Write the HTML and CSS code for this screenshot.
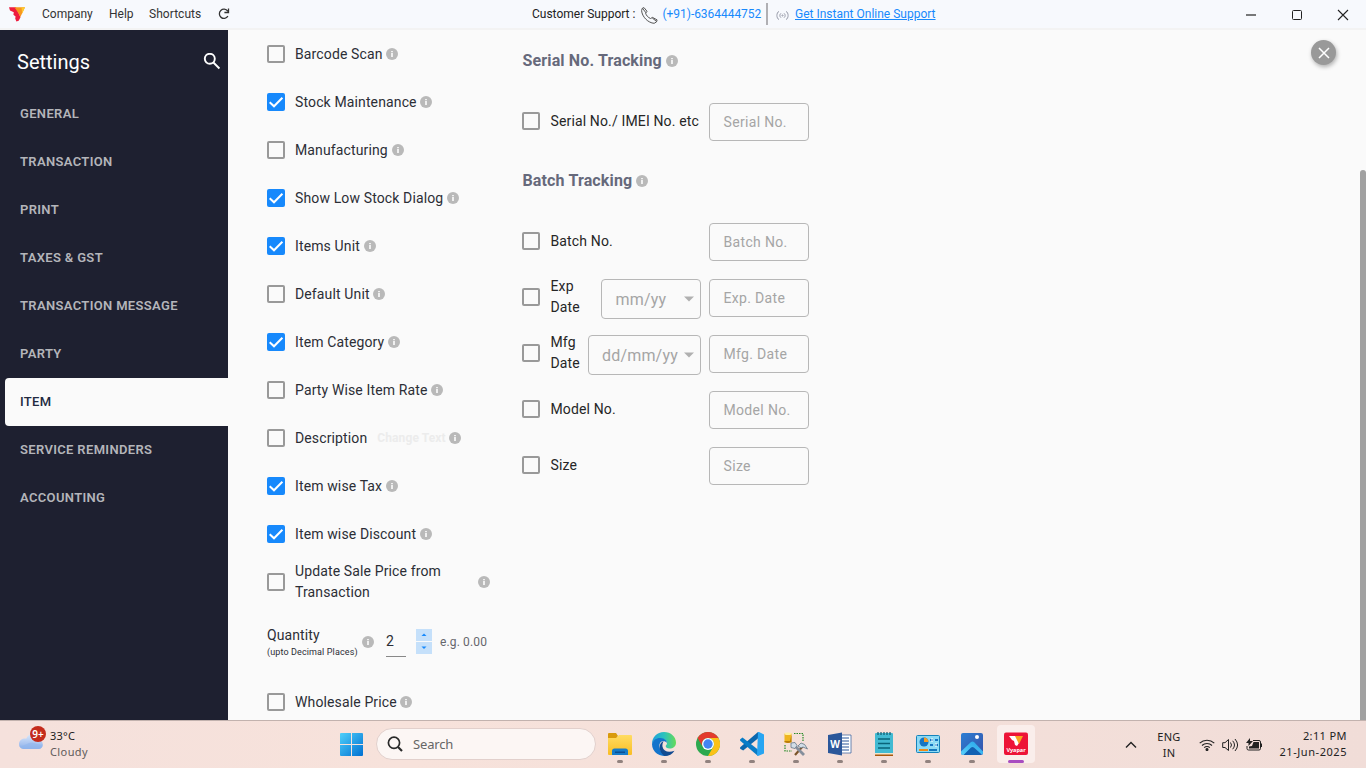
FILE: index.html
```
<!DOCTYPE html>
<html lang="en">
<head>
<meta charset="utf-8">
<title>Settings</title>
<link rel="stylesheet" href="styles.css">
</head>
<body>
<svg class="defs" width="0" height="0">
  <symbol id="info" viewBox="0 0 12 12"><circle cx="6" cy="6" r="6" fill="#b9b9b9"/><path d="M5 3h2v1.200H5zM5 5h2v4H5z" fill="#efefef"/></symbol>
  <symbol id="off" viewBox="0 0 18 18"><rect x="1" y="1" width="16" height="16" rx="1" fill="none" stroke="#999" stroke-width="2"/></symbol>
  <symbol id="on" viewBox="0 0 18 18"><rect width="18" height="18" rx="2" fill="#1789fc"/><path d="M2.700 9.200 7 13.300 15.400 4.800" fill="none" stroke="#fff" stroke-width="2"/></symbol>
  <linearGradient id="gwin" x1="0" y1="0" x2="1" y2="1"><stop offset="0" stop-color="#4fd0fa"/><stop offset="1" stop-color="#0070d2"/></linearGradient>
  <linearGradient id="gcloud" x1="0" y1="0" x2="0" y2="1"><stop offset="0" stop-color="#dce9fb"/><stop offset="1" stop-color="#8db0ea"/></linearGradient>
  <linearGradient id="gfold" x1="0" y1="0" x2="0" y2="1"><stop offset="0" stop-color="#ffdc62"/><stop offset="1" stop-color="#f9bd24"/></linearGradient>
  <linearGradient id="gedge" x1="0" y1="0" x2="1" y2="0"><stop offset="0" stop-color="#209fdc"/><stop offset=".5" stop-color="#2cc2bd"/><stop offset="1" stop-color="#66db58"/></linearGradient>
  <linearGradient id="gphoto" x1="0" y1="0" x2="1" y2="1"><stop offset="0" stop-color="#2c7fd4"/><stop offset="1" stop-color="#3851a8"/></linearGradient>
  <linearGradient id="ghill" x1="0" y1="1" x2="1" y2="0"><stop offset="0" stop-color="#5cd0fa"/><stop offset="1" stop-color="#23a4ea"/></linearGradient>
</svg>

<header class="titlebar">
  <nav class="menu">
    <svg class="logo" width="17" height="15" viewBox="0 0 17 15"><path d="M0 .3h7l3 6.500 1.500 3.400-1.800 3.600-2.300.6-1.200-2.900.4-2.100-2.200-1.700.4-2.500L1 3.500z" fill="#ee1c3e"/><path d="M5.500.3H16L11.400 10 9.300 6z" fill="#f7971e"/><path d="M12.500.3H16L13.200 6.400z" fill="#fdc82f"/></svg>
    <span class="m-company">Company</span><span class="m-help">Help</span><span class="m-short">Shortcuts</span>
    <svg width="12" height="12" viewBox="0 0 12 12" fill="none" stroke="#333" stroke-width="1.300"><path d="M9.700 3.100A4.600 4.600 0 1 0 9.900 8.200M10.500.5v4H6.400"/></svg>
  </nav>
  <div class="support">
    <span class="cs">Customer Support :</span>
    <svg class="phone" width="17" height="17" viewBox="0 0 17 17" fill="none" stroke="#555" stroke-width="1"><path d="M1.200 1.400 3 .6l3 3.700-1.400 1.800c.6 2.400 2.400 4.300 4.900 5.400l2-1.100 4.600 2.500-.6 2-2.300 1.400C7.200 16 1 9.800 .6 3.600zM1.500 1.400 5 5.800M11.200 10.900l4.400 3.600"/></svg>
    <span class="num">(+91)-6364444752</span>
    <i class="divider"></i>
    <svg class="live" width="13" height="9" viewBox="0 0 13 9" fill="none" stroke="#999caa" stroke-width="1"><path d="M3 .4C.2 1.600.2 7.300 3 8.600M10 .4c2.800 1.200 2.800 6.900 0 8.200M5 2.300c-1.500.7-1.500 3.700 0 4.400M8 2.300c1.500.7 1.500 3.700 0 4.400"/><circle cx="6.500" cy="4.500" r=".6"/></svg>
    <span class="online">Get Instant Online Support</span>
  </div>
  <div class="winbtns">
    <svg width="12" height="12" viewBox="0 0 12 12"><path d="M1 6h10" stroke="#222" stroke-width="1.200"/></svg>
    <svg width="12" height="12" viewBox="0 0 12 12"><rect x="1.500" y="1.500" width="9" height="9" rx="1" fill="none" stroke="#222"/></svg>
    <svg width="12" height="12" viewBox="0 0 12 12"><path d="m1 1 10 10M11 1 1 11" stroke="#222" stroke-width="1.100"/></svg>
  </div>
</header>

<div class="app">
  <aside class="sidebar">
    <div class="side-head"><span>Settings</span>
      <svg width="18" height="18" viewBox="0 0 18 18" fill="none" stroke="#fff" stroke-width="1.900"><circle cx="6.800" cy="5.800" r="5"/><path d="m10.400 9.500 6 6"/></svg>
    </div>
    <a class="side">GENERAL</a>
    <a class="side">TRANSACTION</a>
    <a class="side">PRINT</a>
    <a class="side">TAXES &amp; GST</a>
    <a class="side">TRANSACTION MESSAGE</a>
    <a class="side">PARTY</a>
    <a class="side active">ITEM</a>
    <a class="side">SERVICE REMINDERS</a>
    <a class="side">ACCOUNTING</a>
  </aside>

  <main class="content">
    <section class="options">
      <div class="opt"><svg class="cb"><use href="#off"/></svg><span>Barcode Scan</span><svg class="info"><use href="#info"/></svg></div>
      <div class="opt"><svg class="cb"><use href="#on"/></svg><span>Stock Maintenance</span><svg class="info"><use href="#info"/></svg></div>
      <div class="opt"><svg class="cb"><use href="#off"/></svg><span>Manufacturing</span><svg class="info"><use href="#info"/></svg></div>
      <div class="opt"><svg class="cb"><use href="#on"/></svg><span>Show Low Stock Dialog</span><svg class="info"><use href="#info"/></svg></div>
      <div class="opt"><svg class="cb"><use href="#on"/></svg><span>Items Unit</span><svg class="info"><use href="#info"/></svg></div>
      <div class="opt"><svg class="cb"><use href="#off"/></svg><span>Default Unit</span><svg class="info"><use href="#info"/></svg></div>
      <div class="opt"><svg class="cb"><use href="#on"/></svg><span>Item Category</span><svg class="info"><use href="#info"/></svg></div>
      <div class="opt"><svg class="cb"><use href="#off"/></svg><span>Party Wise Item Rate</span><svg class="info"><use href="#info"/></svg></div>
      <div class="opt"><svg class="cb"><use href="#off"/></svg><span>Description</span><b class="change">Change Text</b><svg class="info"><use href="#info"/></svg></div>
      <div class="opt"><svg class="cb"><use href="#on"/></svg><span>Item wise Tax</span><svg class="info"><use href="#info"/></svg></div>
      <div class="opt"><svg class="cb"><use href="#on"/></svg><span>Item wise Discount</span><svg class="info"><use href="#info"/></svg></div>
      <div class="opt"><svg class="cb"><use href="#off"/></svg><span class="wrap">Update Sale Price from Transaction</span><svg class="info"><use href="#info"/></svg></div>
      <div class="qty">
        <div class="qlabel"><span>Quantity</span><small>(upto Decimal Places)</small></div>
        <svg class="info"><use href="#info"/></svg>
        <span class="qval">2</span>
        <div class="spin">
          <span><svg width="6" height="4" viewBox="0 0 6 4"><path d="M.5 3h5L3 .5z" fill="#1789fc"/></svg></span>
          <span><svg width="6" height="4" viewBox="0 0 6 4"><path d="M.5 .5h5L3 3z" fill="#1789fc"/></svg></span>
        </div>
        <span class="eg">e.g. 0.00</span>
      </div>
      <div class="opt"><svg class="cb"><use href="#off"/></svg><span>Wholesale Price</span><svg class="info"><use href="#info"/></svg></div>
    </section>

    <section class="tracking">
      <h2>Serial No. Tracking<svg class="info"><use href="#info"/></svg></h2>
      <div class="trk"><svg class="cb"><use href="#off"/></svg><span class="lab">Serial No./ IMEI No. etc</span><div class="field">Serial No.</div></div>
      <h2 class="second">Batch Tracking<svg class="info"><use href="#info"/></svg></h2>
      <div class="trk"><svg class="cb"><use href="#off"/></svg><span class="lab">Batch No.</span><div class="field">Batch No.</div></div>
      <div class="trk"><svg class="cb"><use href="#off"/></svg><span class="lab two">Exp<br>Date</span><div class="select">mm/yy<svg width="10" height="6" viewBox="0 0 10 6"><path d="M0 .5h10L5 5.500z" fill="#b0b0b0"/></svg></div><div class="field">Exp. Date</div></div>
      <div class="trk"><svg class="cb"><use href="#off"/></svg><span class="lab two">Mfg<br>Date</span><div class="select wide">dd/mm/yy<svg width="10" height="6" viewBox="0 0 10 6"><path d="M0 .5h10L5 5.500z" fill="#b0b0b0"/></svg></div><div class="field">Mfg. Date</div></div>
      <div class="trk"><svg class="cb"><use href="#off"/></svg><span class="lab">Model No.</span><div class="field">Model No.</div></div>
      <div class="trk"><svg class="cb"><use href="#off"/></svg><span class="lab">Size</span><div class="field">Size</div></div>
    </section>

    <div class="close"><svg width="12" height="12" viewBox="0 0 12 12"><path d="m1 1 10 10M11 1 1 11" stroke="#fff" stroke-width="1.500"/></svg></div>
    <i class="scroll"></i>
  </main>
</div>

<footer class="taskbar">
  <div class="weather">
    <svg width="28" height="26" viewBox="0 0 28 26"><path d="M5.500 24h15a4.500 4.500 0 0 0 1-8.800C20.800 11 17.500 8.500 13.800 9c-2.800.3-4.600 2-5.400 4.500C4.500 13 1 15 1 19.300 1 22 3 24 5.500 24z" fill="url(#gcloud)"/><path d="M1.400 20.500C6 22 10 17 14 17.500s7 3 10.800 1.700C25 22 23 24 20.500 24h-15c-2 0-3.700-1.500-4.100-3.500z" fill="#91b6ed" opacity=".6"/><circle cx="20" cy="9" r="8" fill="#c42b1c"/><text x="20" y="12.500" class="badge">9+</text></svg>
    <div><span>33°C</span><span class="dim">Cloudy</span></div>
  </div>
  <div class="tasks">
    <svg class="start" width="23" height="23" viewBox="0 0 23 23"><path d="M1 0h10v11H0V1a1 1 0 0 1 1-1zM12 0h10a1 1 0 0 1 1 1v10H12zM0 12h11v11H1a1 1 0 0 1-1-1zM12 12h11v10a1 1 0 0 1-1 1H12z" fill="url(#gwin)"/></svg>
    <div class="search"><svg width="16" height="16" viewBox="0 0 16 16" fill="none" stroke="#292929" stroke-width="1.700"><circle cx="7" cy="6.800" r="5.600"/><path d="m11 11 4 4" stroke-width="2.200"/></svg><span>Search</span></div>
    <div class="ticon"><svg viewBox="0 0 24 24"><path d="M0 2q0-1 1-1h7l2 3-2 3H0z" fill="#d99a0c"/><path d="M0 6h8l3-3h12q1 0 1 1v18q0 1-1 1H1q-1 0-1-1z" fill="url(#gfold)"/><path d="M4 23v-4q0-2.500 2.500-2.500h11q2.500 0 2.500 2.500v4z" fill="#167bc8"/><path d="M7 19.500h10V21H7z" fill="#0b4f92"/></svg><i></i></div>
    <div class="ticon"><svg viewBox="0 0 24 24"><path d="M0 12C0 5 5 0 12 0c7 0 12 5 12 10.500 0 4-3 6-6.500 6-2.500 0-3.800-1-3.800-2.200 0-1 1.300-1.500 1.300-3.300C15 8.500 12.500 7 9 7c-5 0-8 2-9 5z" fill="url(#gedge)"/><path d="M0 12C1 8 4.500 5.800 8.500 6c4 .2 6.500 2.500 6.500 5-.8-1.200-2-1.800-3.500-1.800C8 9.200 7 12 7.500 15c.7 4.500 4 7.500 8.500 8.300A12 12 0 0 1 0 12z" fill="#1374cc"/><path d="M11.500 9.200C6 11 6.500 20 12.500 24c4.500 0 8-2 10-5.300-5.500 2.300-11 1-12-4-.3-2 0-3.500 1-5.500z" fill="#124b91"/></svg><i></i></div>
    <div class="ticon"><svg viewBox="0 0 24 24"><circle cx="12" cy="12" r="12" fill="#2da94f"/><path d="M1.600 6A12 12 0 0 1 22.400 6H12a6 6 0 0 0-5.200 9z" fill="#e33b2e"/><path d="M22.400 6A12 12 0 0 1 12 24l5.200-9A6 6 0 0 0 12 6z" fill="#fbc116"/><circle cx="12" cy="12" r="6" fill="#fff"/><circle cx="12" cy="12" r="4.700" fill="#4285f4"/></svg><i></i></div>
    <div class="ticon"><svg viewBox="0 0 24 24"><path d="m18 0 .5 6L3.200 18.500.5 17q-1-1 0-2z" fill="#0b67ae"/><path d="m0 7.500 2.500-2L18.500 18 18 24 .5 9q-.8-.8-.5-1.500z" fill="#087cc7"/><path d="M18 0h1l5 2.500v19L18 24l-1-1z" fill="#27a5f2"/></svg><i></i></div>
    <div class="ticon"><svg viewBox="0 0 24 24"><path d="M10 1.500h9V9M1 13v6h7" fill="none" stroke="#258a25" stroke-width="1.200" stroke-dasharray="1.500 1"/><path d="M.5 1.500h7v9h-7z" fill="#efb51f"/><ellipse cx="4" cy="1.800" rx="3.500" ry="1.300" fill="#fff0a0"/><path d="M.5 10q3.500 2 7 0V2.500L6 9H.5z" fill="#b97c08"/><path d="m11 23 8-9" stroke="#7b542a" stroke-width="2.200"/><path d="m10 13 10 10" stroke="#858f9c" stroke-width="2.800"/><path d="m7 11 4-.5 2 3-2 3-4-1zM14 14l3-3q4 0 6.500 6l-4.500-2-2 1z" fill="#d3dee7" stroke="#667685" stroke-width=".8"/></svg><i></i></div>
    <div class="ticon"><svg viewBox="0 0 24 24"><path d="M13 3h10v18H13z" fill="#fff" stroke="#2b579a" stroke-width=".7"/><path d="M14 6h7M14 9h7M14 12h7M14 15h7M14 18h7" stroke="#2b579a"/><path d="M0 3 14 .5v23L0 21z" fill="#2b579a"/><text x="7" y="16" class="word">W</text></svg><i></i></div>
    <div class="ticon"><svg viewBox="0 0 24 24"><path d="M3 20h18v4H3z" fill="#a9570c"/><path d="M3 2q0-1 1-1h16q1 0 1 1v19H3z" fill="#42bad2"/><path d="M3 21h18v1.500H3z" fill="#f2e4c8"/><path d="M6 0v3M9 0v3M12 0v3M15 0v3M18 0v3" stroke="#105b70" stroke-width="1.200"/><path d="M6 7h12M6 11.500h12M6 16h12" stroke="#09647a" stroke-width="1.600"/></svg><i></i></div>
    <div class="ticon"><svg viewBox="0 0 24 24"><rect x=".5" y="3.500" width="23" height="17" rx="1" fill="#8cdaf5" stroke="#1683bb"/><circle cx="8" cy="10" r="4.500" fill="#1675c2"/><path d="M8 10V5.500a4.500 4.500 0 0 1 4.500 4.500z" fill="#f59b23"/><path d="M3 18h9" stroke="#f08b16" stroke-width="2"/><path d="M13 18h8" stroke="#1477bd" stroke-width="2"/><path d="M14 8h3m2 0h3M14 13h3m2 0h3" stroke="#1675c2" stroke-width="1.800"/><path d="M16 6v4m4 1v4" stroke="#fff"/></svg><i></i></div>
    <div class="ticon"><svg viewBox="0 0 24 24"><rect x="1" y="1" width="22" height="22" rx="2" fill="url(#gphoto)"/><path d="M3 22.500 12 14l9.500 8.500-1.500.5H4z" fill="#1261b3"/><path d="M1 19.500 11 10q1.500-1.200 3 0l9 9.500V21q0 1-1 1.700L14 15.500q-1.500-1.200-3 0L3.500 23H3q-2 0-2-2z" fill="url(#ghill)"/><circle cx="17" cy="5" r="2" fill="#fff"/></svg><i></i></div>
    <div class="ticon current"><svg viewBox="0 0 24 24"><rect y=".5" width="24" height="22.500" rx="2" fill="#ed1437"/><path d="M5 4h7l3 7-2 3-2-1-1-4-2-1z" fill="#fff"/><path d="M11 4h8l-4 8z" fill="#f9a51e"/><text x="12" y="20" class="vy">Vyapar</text></svg><i></i></div>
  </div>
  <div class="tray">
    <svg class="chev" width="12" height="8" viewBox="0 0 12 8"><path d="m1 6.500 5-5 5 5" fill="none" stroke="#222" stroke-width="1.400"/></svg>
    <div class="lang"><span>ENG</span><span>IN</span></div>
    <svg class="wifi" width="16" height="12" viewBox="0 0 16 12" fill="none" stroke="#222" stroke-width="1.100"><path d="M.7 4.200a10.500 10.500 0 0 1 14.600 0M3 6.500a7.200 7.200 0 0 1 10 0M5.200 8.700a4 4 0 0 1 5.600 0"/><circle cx="8" cy="10.500" r="1" fill="#222"/></svg>
    <svg class="vol" width="17" height="14" viewBox="0 0 17 14" fill="none" stroke="#222" stroke-width="1"><path d="M.7 4.700H3L6.500 1.500v11L3 9.500H.7zM8.500 4.500q2 2.500 0 5M10.700 2.800q3.600 4.200 0 8.400M13 1q5.200 6 0 12"/></svg>
    <svg class="bat" width="17" height="14" viewBox="0 0 17 14"><path d="M7 2.500h6q1.500 0 1.500 1.500v6.500q0 1.500-1.500 1.500H2.500Q1 12 1 10.500V8" fill="none" stroke="#222"/><path d="M7.500 4h5.500v6.500H3V8.500L6 8zM14.500 5.500H16v3.500h-1.500z" fill="#222"/><path d="M4 0v3h3L2.500 8V5H0z" fill="#222"/></svg>
    <div class="clock"><span>2:11 PM</span><span>21-Jun-2025</span></div>
  </div>
</footer>
</body>
</html>
```
FILE: styles.css
```
* { box-sizing: border-box; }
body { margin: 0; width: 1366px; height: 768px; overflow: hidden; display: flex; flex-direction: column; font-family: Roboto, "Liberation Sans", sans-serif; color: #2c2e36; background: #fafafa; }
svg { display: block; flex: none; }
.defs { position: absolute; }
.titlebar { height: 30px; flex: none; background: #f7f9fd; border-bottom: 2px solid #f3f3f3; display: flex; align-items: center; justify-content: space-between; font-size: 12px; color: #333; }
.menu { display: flex; align-items: center; width: 532px; padding-left: 9px; }
.logo { margin-right: 16px; }
.m-company { width: 67px; }
.m-help { width: 40px; }
.m-short { width: 69px; letter-spacing: .05px; }
.support { display: flex; align-items: center; flex: 1; color: #222; }
.cs { width: 109px; letter-spacing: 0; white-space: nowrap; }
.phone { margin-right: 4.500px; margin-top: 2px; }
.num { width: 103.500px; color: #1789fc; letter-spacing: -.04px; }
.divider { width: 2px; height: 22px; background: #b0b0b4; margin-right: 8px; }
.live { margin: 2px 6px 0 0; }
.online { color: #1789fc; text-decoration: underline; }
.winbtns { display: flex; gap: 34px; padding: 2px 17px 0 0; }
.app { flex: 1; min-height: 0; display: flex; overflow: hidden; }
.sidebar { width: 228px; background: #1e2030; flex: none; }
.side-head { height: 60px; display: flex; align-items: center; justify-content: space-between; padding: 4px 7px 0 17px; font-size: 20px; color: #fff; }
.side { display: flex; align-items: center; height: 48px; margin-left: 5px; padding-left: 15px; padding-bottom: 1px; font-size: 13px; font-weight: 600; letter-spacing: .34px; color: #b4b5ba; }
.side.active { background: #fafafa; color: #222a3f; font-weight: 500; border-radius: 4px 0 0 4px; }
.content { position: relative; flex: 1; display: flex; padding-left: 39px; }
.options { width: 255px; }
.opt { height: 48px; display: flex; align-items: center; font-size: 14px; letter-spacing: .13px; line-height: 21px; }
.cb { width: 18px; height: 18px; margin-right: 10px; }
.info { width: 12px; height: 12px; margin-left: 4px; }
.opt .info { margin-left: 3.700px; }
.wrap { width: 179px; padding-right: 20px; }
.change { font-size: 12px; color: #ececec; margin-left: 10px; letter-spacing: .1px; }
.qty { height: 72px; display: flex; align-items: center; }
.qlabel { width: 91px; display: flex; flex-direction: column; font-size: 14px; line-height: 18px; letter-spacing: .1px; padding-top: 3px; }
.qlabel small { font-size: 9px; line-height: 17px; white-space: nowrap; letter-spacing: .12px; }
.qval { width: 20px; height: 30px; margin-left: 12px; line-height: 28px; font-size: 14px; border-bottom: 1px solid #888; }
.spin { display: flex; flex-direction: column; gap: 1px; width: 16px; margin: 0 0 1px 10px; }
.spin span { display: flex; align-items: center; justify-content: center; height: 12px; background: #c5e0fa; }
.eg { margin-left: 8px; font-size: 12px; letter-spacing: .14px; color: #66666c; }
.tracking { width: 287px; }
.tracking h2 { margin: 0; height: 61px; display: flex; align-items: center; padding-left: .5px; font-size: 16px; font-weight: 700; letter-spacing: .14px; color: #66697b; }
.tracking h2 + .trk { margin-top: 3px; }
.tracking .second { height: 61px; }
.trk { height: 56px; display: flex; align-items: center; font-size: 14px; letter-spacing: .14px; color: #262626; }
.trk .cb { margin-bottom: 2px; }
.lab { flex: 1; padding-bottom: 2px; padding-left: .5px; line-height: 21px; white-space: nowrap; }
.lab.two { min-width: 0; }
.field { flex: none; width: 100px; height: 38px; border: 1px solid #b7b7b7; border-radius: 4px; padding-left: 13.500px; display: flex; align-items: center; color: #a5a5a5; letter-spacing: .33px; }
.select { flex: none; width: 100px; height: 40px; margin: 2px 8px 0 0; border: 1px solid #b7b7b7; border-radius: 4px; display: flex; align-items: center; justify-content: space-between; padding: 0 6px 0 13.500px; color: #a5a5a5; font-size: 16px; letter-spacing: .18px; }
.select.wide { width: 113px; padding-left: 13px; }
.close { position: absolute; right: 30px; top: 10px; width: 25px; height: 25px; border-radius: 50%; background: #999; display: flex; align-items: center; justify-content: center; box-shadow: 1px 2px 4px rgba(0,0,0,.3); }
.scroll { position: absolute; right: 0; top: 140px; width: 6px; height: 560px; background: #a1a1a1; border-radius: 3px 3px 0 0; }
.taskbar { height: 48px; flex: none; background: linear-gradient(90deg, #f5e1dc, #f7e2db 30%, #f1ddd8); border-top: 1px solid #c2b2ae; display: flex; font-family: "Noto Sans", "Open Sans", sans-serif; font-size: 11px; color: #222; }
.weather { width: 340px; padding: 4px 0 0 18px; display: flex; gap: 4px; }
.weather div, .lang, .clock { display: flex; flex-direction: column; line-height: 16px; }
.weather div { padding-top: 3px; letter-spacing: .2px; }
.weather .dim { color: #605b5a; letter-spacing: .4px; }
.badge { font: 600 10px "Noto Sans", sans-serif; fill: #fff; text-anchor: middle; }
.word { font: 700 10px "Noto Sans", sans-serif; fill: #fff; text-anchor: middle; }
.vy { font: 700 5.500px "Noto Sans", sans-serif; fill: #fff; text-anchor: middle; }
.tasks { display: flex; width: 790px; }
.start { margin: 12px 13px 0 0; }
.search { width: 220px; height: 32px; margin: 7px 5px 0 0; border: 1px solid #e2d0cc; border-radius: 16px; background: #fcf6f4; display: flex; align-items: center; gap: 10px; padding-left: 10px; font-size: 13px; letter-spacing: -.15px; color: #666; }
.ticon { width: 38px; height: 38px; margin: 4px 6px 0 0; padding-top: 7px; border-radius: 4px; display: flex; flex-direction: column; align-items: center; justify-content: space-between; }
.ticon svg { width: 24px; height: 24px; }
.ticon i { width: 6px; height: 3px; border-radius: 2px; background: #91827f; }
.current { background: #faeeeb; }
.current i { width: 16px; background: #a84cc0; }
.tray { width: 236px; display: flex; align-items: center; }
.lang { width: 28px; margin: 0 16px 0 18px; align-items: center; letter-spacing: .3px; }
.chev { margin-left: -5px; }
.wifi { margin-right: 7px; }
.vol { margin-right: 7px; }
.clock { align-items: flex-end; margin-left: auto; padding: 0 19px 2px 0; letter-spacing: .55px; }
.clock span:first-child { letter-spacing: .4px; }
```
